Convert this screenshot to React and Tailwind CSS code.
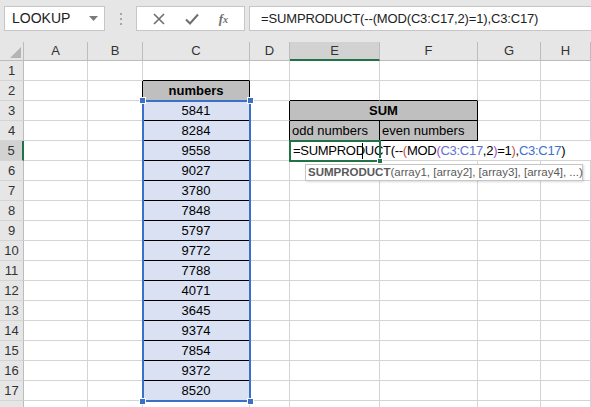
import React from "react";

const FONT = { fontFamily: '"Liberation Sans", Arial, sans-serif' };

const NUMBERS = [5841, 8284, 9558, 9027, 3780, 7848, 5797, 9772, 7788, 4071, 3645, 9374, 7854, 9372, 8520];

function Cell({ w, right = "border-r-[#d4d4d4]", bottom = "border-b-[#d4d4d4]", bg = "bg-white", className = "", children }) {
  return (
    <div
      className={`${w} h-full border-r border-b ${right} ${bottom} ${bg} flex items-center overflow-hidden whitespace-nowrap ${className}`}
    >
      {children}
    </div>
  );
}

function RowHeader({ n, active }) {
  return (
    <div
      className={`w-[24px] shrink-0 h-full flex items-center justify-center border-b border-b-[#d4d4d4] text-[13px] text-[#333] ${
        active ? "bg-[#d2d2d2] border-r-2 border-r-[#217346]" : "bg-[#e6e6e6] border-r border-r-[#bcbcbc]"
      }`}
    >
      {n}
    </div>
  );
}

function FormulaText() {
  return (
    <span className="tracking-[-0.28px]">
      =SUMPRODUCT(--<span className="text-[#c0504d]">(</span>MOD
      <span className="text-[#a94fc6]">(</span>
      <span className="text-[#6270d6]">C3:C17</span>,2<span className="text-[#a94fc6]">)</span>=1
      <span className="text-[#c0504d]">)</span>,<span className="text-[#3b6fd4]">C3:C17</span>)
    </span>
  );
}

function SheetRow({ r }) {
  const num = r >= 3 && r <= 17 ? NUMBERS[r - 3] : null;
  const blackR = "border-r-black";
  const blackB = "border-b-black";

  return (
    <div className="flex h-[20px] shrink-0">
      <RowHeader n={r <= 17 ? r : ""} active={r === 5} />
      <Cell w="w-[64px] shrink-0" />
      <Cell w="w-[55px] shrink-0" right={r >= 2 && r <= 17 ? blackR : undefined} />
      {(r === 1 || r === 18) && <Cell w="w-[107px] shrink-0" bottom={r === 1 ? blackB : undefined} />}
      {r === 2 && (
        <Cell w="w-[107px] shrink-0 justify-center font-bold" bg="bg-[#bfbfbf]" right={blackR} bottom={blackB}>
          numbers
        </Cell>
      )}
      {r >= 3 && r <= 17 && (
        <Cell w="w-[107px] shrink-0 justify-center" bg="bg-[#d9e1f2]" right={blackR} bottom={blackB}>
          {num}
        </Cell>
      )}
      <Cell w="w-[40px] shrink-0" right={r === 3 || r === 4 ? blackR : undefined} />
      {r === 2 && (
        <>
          <Cell w="w-[90px] shrink-0" bottom={blackB} />
          <Cell w="w-[98px] shrink-0" bottom={blackB} />
        </>
      )}
      {r === 3 && (
        <Cell w="w-[188px] shrink-0 justify-center font-bold" bg="bg-[#bfbfbf]" right={blackR} bottom={blackB}>
          SUM
        </Cell>
      )}
      {r === 4 && (
        <>
          <Cell w="w-[90px] shrink-0 pl-[2px]" bg="bg-[#bfbfbf]" right={blackR} bottom={blackB}>
            odd numbers
          </Cell>
          <Cell w="w-[98px] shrink-0 pl-[2px]" bg="bg-[#bfbfbf]" right={blackR} bottom={blackB}>
            even numbers
          </Cell>
        </>
      )}
      {r === 5 ? (
        <div className="relative flex-1 h-full border-b border-b-[#d4d4d4] bg-white flex items-center whitespace-nowrap pl-[3px]">
          <FormulaText />
          {/* active cell */}
          <div className="absolute left-[-1px] top-[-1px] w-[92px] h-[22px] border-2 border-[#217346] pointer-events-none" />
          <div className="absolute left-[87px] top-[17px] w-[6px] h-[6px] bg-[#217346] border border-white" />
          {/* caret */}
          <div className="absolute left-[72px] top-[2px] w-px h-[16px] bg-black" />
          {/* function tooltip */}
          <div className="absolute left-[15px] top-[23px] w-[278px] h-[17px] bg-white border border-[#c6c6c6] shadow-[1px_1px_2px_rgba(0,0,0,0.15)] flex items-center pl-[2px] text-[11.5px] text-[#595959] z-20">
            <span className="font-bold">SUMPRODUCT</span>(array1, [array2], [array3], [array4], ...)
          </div>
        </div>
      ) : (
        <>
          {r !== 2 && r !== 3 && r !== 4 && (
            <>
              <Cell w="w-[90px] shrink-0" />
              <Cell w="w-[98px] shrink-0" />
            </>
          )}
          <Cell w="w-[63px] shrink-0" />
          <Cell w="flex-1" />
        </>
      )}
    </div>
  );
}

function ColHeader({ w, label, active }) {
  return (
    <div
      className={`${w} h-full flex items-center justify-center border-r border-r-[#bcbcbc] text-[13px] text-[#333] ${
        active ? "bg-[#d2d2d2] border-b-2 border-b-[#217346]" : "bg-[#e6e6e6] border-b border-b-[#bcbcbc]"
      }`}
    >
      {label}
    </div>
  );
}

function FormulaBar() {
  return (
    <div className="h-[42px] shrink-0 bg-[#e6e6e6] flex items-start pt-[6px] pl-[4px]">
      {/* name box */}
      <div className="w-[101px] h-[25px] bg-white border border-[#c6c6c6] flex items-center pl-[7px] pr-[6px] justify-between text-[14px] text-[#222]">
        <span>LOOKUP</span>
        <svg width="9" height="5" viewBox="0 0 9 5">
          <path d="M0 0h9L4.5 5z" fill="#7a7a7a" />
        </svg>
      </div>
      {/* separator dots */}
      <div className="w-[31px] h-[25px] flex flex-col items-center justify-center gap-[3px]">
        <div className="w-[2px] h-[2px] bg-[#a6a6a6]" />
        <div className="w-[2px] h-[2px] bg-[#a6a6a6]" />
        <div className="w-[2px] h-[2px] bg-[#a6a6a6]" />
      </div>
      {/* cancel / enter / fx */}
      <div className="w-[109px] h-[25px] bg-white border border-[#c6c6c6] flex items-center justify-around px-[6px]">
        <svg width="12" height="12" viewBox="0 0 12 12">
          <path d="M1 1L11 11M11 1L1 11" stroke="#6e6e6e" strokeWidth="1.6" />
        </svg>
        <svg width="14" height="12" viewBox="0 0 14 12">
          <path d="M1 6.5L5 10.5L13 1.5" stroke="#6e6e6e" strokeWidth="2" fill="none" />
        </svg>
        <span className="text-[13px] text-[#6e6e6e] italic font-bold" style={{ fontFamily: '"Liberation Serif", serif' }}>
          f<span className="text-[10px]">x</span>
        </span>
      </div>
      {/* formula input */}
      <div className="ml-[4px] flex-1 h-[25px] bg-white border border-r-0 border-[#c6c6c6] flex items-center pl-[11px] text-[13px] text-[#222] whitespace-nowrap tracking-[-0.15px]">
        =SUMPRODUCT(--(MOD(C3:C17,2)=1),C3:C17)
      </div>
    </div>
  );
}

export default function App() {
  const rows = Array.from({ length: 18 }, (_, i) => i + 1);
  return (
    <div className="w-[591px] h-[407px] overflow-hidden bg-white flex flex-col text-[13px] text-black" style={FONT}>
      <FormulaBar />
      <div className="flex h-[19px] shrink-0">
        <div className="w-[24px] h-full bg-[#e6e6e6] border-r border-b border-[#bcbcbc] flex items-end justify-end p-[2px]">
          <svg width="11" height="11" viewBox="0 0 11 11">
            <path d="M11 0V11H0z" fill="#b4b4b4" />
          </svg>
        </div>
        <ColHeader w="w-[64px] shrink-0" label="A" />
        <ColHeader w="w-[55px] shrink-0" label="B" />
        <ColHeader w="w-[107px] shrink-0" label="C" />
        <ColHeader w="w-[40px] shrink-0" label="D" />
        <ColHeader w="w-[90px] shrink-0" label="E" active />
        <ColHeader w="w-[98px] shrink-0" label="F" />
        <ColHeader w="w-[63px] shrink-0" label="G" />
        <ColHeader w="flex-1" label="H" />
      </div>
      <div className="relative flex flex-col">
        {rows.map((r) => (
          <SheetRow key={r} r={r} />
        ))}
        {/* selection C3:C17 */}
        <div className="absolute left-[142px] top-[39px] w-[109px] h-[302px] border-2 border-[#3b70c9] pointer-events-none" />
        <div className="absolute left-[139px] top-[36px] w-[7px] h-[7px] bg-[#3b70c9] border border-white" />
        <div className="absolute left-[247px] top-[36px] w-[7px] h-[7px] bg-[#3b70c9] border border-white" />
        <div className="absolute left-[139px] top-[337px] w-[7px] h-[7px] bg-[#3b70c9] border border-white" />
        <div className="absolute left-[247px] top-[337px] w-[7px] h-[7px] bg-[#3b70c9] border border-white" />
      </div>
    </div>
  );
}
